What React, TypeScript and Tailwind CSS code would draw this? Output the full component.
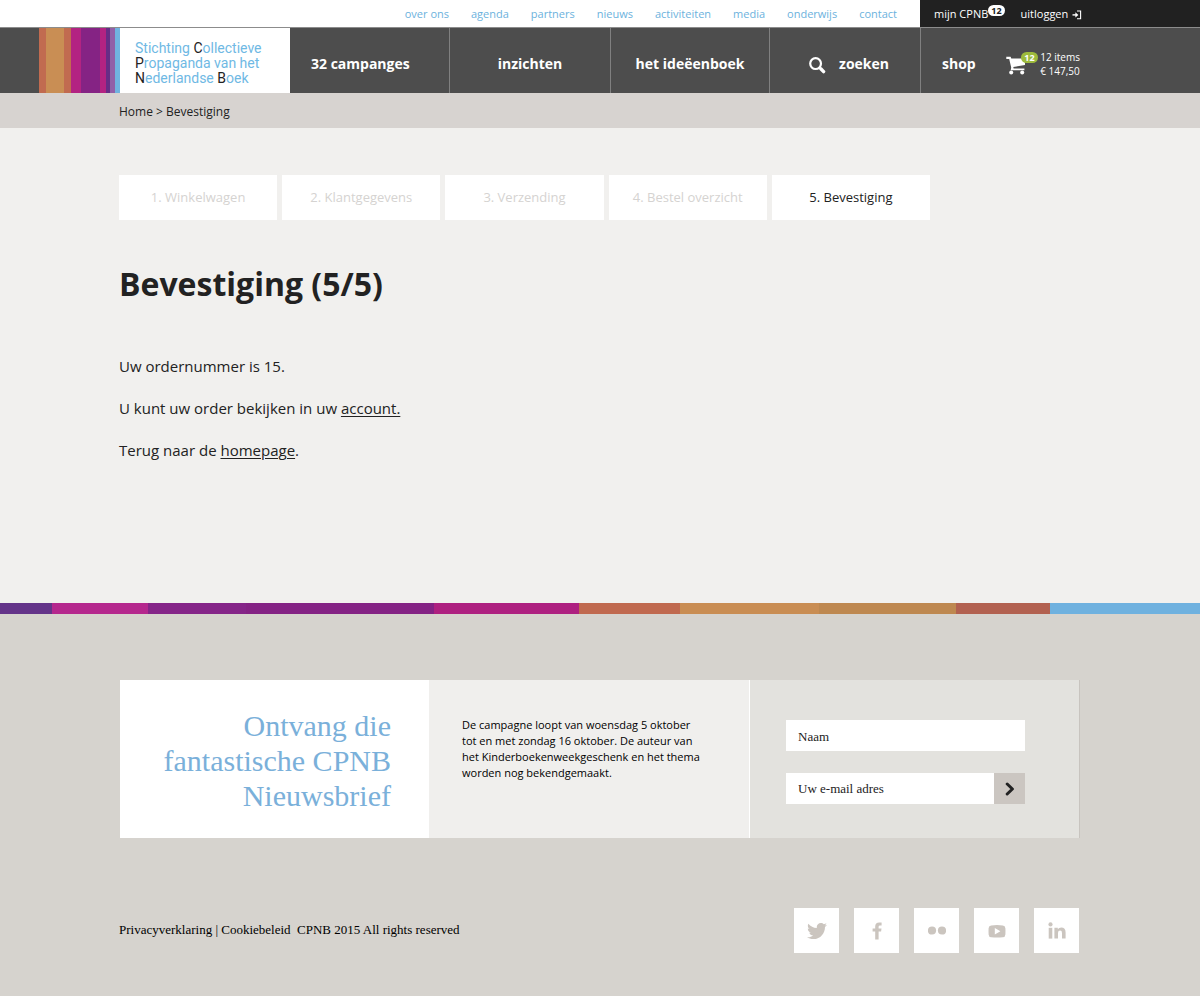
import React from "react";
import { FaTwitter } from "react-icons/fa";

const topLinks = ["over ons", "agenda", "partners", "nieuws", "activiteiten", "media", "onderwijs", "contact"];

const steps = ["1. Winkelwagen", "2. Klantgegevens", "3. Verzending", "4. Bestel overzicht", "5. Bevestiging"];

function SearchIcon() {
  return (
    <svg width="17" height="17" viewBox="0 0 17 17" fill="none" stroke="currentColor" aria-hidden="true">
      <circle cx="6.6" cy="6.6" r="5.4" strokeWidth="2.2" />
      <path d="M10.6 10.6L11.6 11.6" strokeWidth="2" />
      <path d="M11.8 11.8L14.6 14.6" strokeWidth="3.4" strokeLinecap="round" />
    </svg>
  );
}

function CartIcon() {
  return (
    <svg width="20" height="19" viewBox="0 0 20 19" fill="currentColor" aria-hidden="true">
      <path d="M0.3 0.8H4.6L5.3 2.4H19V9L7.3 11.1L7.6 12.4H18.4V14.2H4.7L5.2 11.6L3.2 2.9H0.3Z" />
      <circle cx="5.2" cy="16.6" r="2" />
      <circle cx="16.2" cy="16.6" r="2" />
    </svg>
  );
}

function LogoutIcon() {
  return (
    <svg width="10" height="10" viewBox="0 0 10 10" fill="none" stroke="currentColor" aria-hidden="true">
      <path d="M5 1H8.6V8.8H5" strokeWidth="1.1" />
      <path d="M0.5 4.9H4" strokeWidth="1.4" />
      <path d="M3.4 2.3L6.4 4.9L3.4 7.5Z" fill="currentColor" stroke="none" />
    </svg>
  );
}

function FacebookIcon() {
  return (
    <svg width="18" height="18" viewBox="0 0 18 18" fill="currentColor" aria-hidden="true">
      <path d="M7.2 17.6V9.6H4.6V6.5H7.2V4.3Q7.2 0.4 11.2 0.4H13.6V3.4H12Q10.6 3.4 10.6 4.8V6.5H13.5L13.1 9.6H10.6V17.6Z" />
    </svg>
  );
}

function LinkedinIcon() {
  return (
    <svg width="18" height="18" viewBox="0 0 18 18" fill="currentColor" aria-hidden="true">
      <circle cx="2.5" cy="2.4" r="2.1" />
      <path d="M0.7 5.8H4.3V16.6H0.7Z" />
      <path d="M6.4 5.8H9.8V7.3Q10.9 5.5 13.2 5.5Q17.6 5.5 17.6 10.4V16.6H14V11Q14 8.6 12.1 8.6Q10 8.6 10 11V16.6H6.4Z" />
    </svg>
  );
}

function FlickrIcon() {
  return (
    <svg width="18" height="18" viewBox="0 0 18 18" fill="currentColor" aria-hidden="true">
      <circle cx="4" cy="8.5" r="4.1" />
      <circle cx="14" cy="8.5" r="4.1" />
    </svg>
  );
}

function YoutubeIcon() {
  return (
    <svg width="18" height="18" viewBox="0 0 18 18" fill="currentColor" aria-hidden="true">
      <path
        fillRule="evenodd"
        d="M3.2 3.4Q9 2.8 14.8 3.4Q17.2 3.6 17.4 6.2Q17.6 9.3 17.4 12.4Q17.2 15 14.8 15.2Q9 15.8 3.2 15.2Q0.8 15 0.6 12.4Q0.4 9.3 0.6 6.2Q0.8 3.6 3.2 3.4ZM6.8 6V12.6L12.4 9.3Z"
      />
    </svg>
  );
}

const socials = [
  { name: "Twitter", icon: <FaTwitter size={20} /> },
  { name: "Facebook", icon: <FacebookIcon /> },
  { name: "Flickr", icon: <FlickrIcon /> },
  { name: "YouTube", icon: <YoutubeIcon /> },
  { name: "LinkedIn", icon: <LinkedinIcon /> },
];

function Initial({ children }: { children: string }) {
  return <span className="text-[#222222]">{children}</span>;
}

function Header() {
  return (
    <header className="whitespace-nowrap">
      <div className="grid h-7 grid-cols-[1fr_800px_160px_1fr] border-b border-[#8c8c8c] text-[11px]">
        <nav aria-label="Service" className="col-span-2 flex items-center justify-end gap-[22px] bg-white pt-0.5 pr-[23px] text-[#6cb2dd]">
          {topLinks.map((link) => (
            <a key={link} href="#">
              {link}
            </a>
          ))}
        </nav>
        <div className="col-span-2 flex items-center gap-4 bg-[#212121] pt-0.5 pl-[14px] text-white">
          <a href="#" className="flex items-center">
            mijn CPNB
            <span className="mb-2 rounded-full bg-white px-[3px] text-[9px] leading-[11px] font-bold text-[#212121]">12</span>
          </a>
          <a href="#" className="flex items-center gap-1">
            uitloggen <LogoutIcon />
          </a>
        </div>
      </div>
      <div className="grid h-[65px] grid-cols-[1fr_170px_160px_161px_159px_151px_159px_1fr] bg-[#4d4d4d] text-[14px] font-bold text-white">
        <div className="flex justify-end">
          <span className="w-[7px] bg-[#c16b50]" />
          <span className="w-[18px] bg-[#c98e54]" />
          <span className="w-[7px] bg-[#c16b50]" />
          <span className="w-[10px] bg-[#b32382]" />
          <span className="w-[19px] bg-[#852384]" />
          <span className="w-[6px] bg-[#b32382]" />
          <span className="w-[4px] bg-[#672d86]" />
          <span className="w-[5px] bg-[#9160a8]" />
          <span className="w-[5px] bg-[#70b3e0]" />
        </div>
        <a href="#" className="flex flex-col justify-center bg-white pt-1.5 pl-[15px] font-['Roboto',sans-serif] text-[14px] leading-[15px] font-normal text-[#6fb9e4]">
          <span>
            Stichting <Initial>C</Initial>ollectieve
          </span>
          <span>
            <Initial>P</Initial>ropaganda van het
          </span>
          <span>
            <Initial>N</Initial>ederlandse <Initial>B</Initial>oek
          </span>
        </a>
        <a href="#" className="flex items-center border-r border-[#808080] pt-2.5 pl-[21px]">
          <span className="mb-1">32 campanges</span>
        </a>
        <a href="#" className="flex items-center justify-center border-r border-[#808080] pt-2.5">
          <span className="mb-1">inzichten</span>
        </a>
        <a href="#" className="flex items-center justify-center border-r border-[#808080] pt-2.5">
          <span className="mb-1">het ideëenboek</span>
        </a>
        <a href="#" className="flex items-center justify-end gap-[13px] border-r border-[#808080] pt-2.5 pr-[31px]">
          <SearchIcon />
          <span className="mb-1">zoeken</span>
        </a>
        <div className="flex items-center justify-between pt-2.5 pl-[21px]">
          <a href="#" className="mb-1">
            shop
          </a>
          <a href="#" className="flex items-center gap-[14px] text-[10px] leading-[14px] font-medium">
            <span className="relative">
              <CartIcon />
              <span className="absolute -top-1 left-[15px] rounded-full bg-[#9dbb3c] px-[3px] text-[9px] leading-[11px] font-bold">12</span>
            </span>
            <span className="mb-1">
              12 items
              <br />€ 147,50
            </span>
          </a>
        </div>
      </div>
      <nav aria-label="Kruimelpad" className="h-[35px] bg-[#d7d3d0] text-[12px] leading-[37px] text-[#222222]">
        <div className="mx-auto max-w-[962px]">
          <a href="#">Home</a> &gt; <a href="#">Bevestiging</a>
        </div>
      </nav>
    </header>
  );
}

function ColourBar() {
  return (
    <div className="grid h-[11px] grid-cols-[52fr_96fr_98fr_188fr_145fr_101fr_139fr_137fr_94fr_150fr]">
      <span className="bg-[#643489]" />
      <span className="bg-[#b5278d]" />
      <span className="bg-[#852588]" />
      <span className="bg-[#842284]" />
      <span className="bg-[#ae2080]" />
      <span className="bg-[#c0694f]" />
      <span className="bg-[#c98d53]" />
      <span className="bg-[#be8850]" />
      <span className="bg-[#b26150]" />
      <span className="bg-[#6fb1df]" />
    </div>
  );
}

function Footer() {
  return (
    <footer className="bg-[#d6d3ce] pb-[43px]">
      <ColourBar />
      <form
        onSubmit={(event) => event.preventDefault()}
        className="mx-auto mt-[66px] grid max-w-[960px] grid-cols-[309px_321px_1fr] border-r border-[#c8c4bf]"
      >
        <h2 className="bg-white pt-7 pr-[38px] pb-[25px] text-right font-['Liberation_Serif',serif] text-[30px] leading-[35px] text-[#7ab0da]">
          Ontvang die
          <br />
          fantastische CPNB
          <br />
          Nieuwsbrief
        </h2>
        <p className="border-r border-white bg-[#f0efed] pt-[37px] pl-[33px] text-[11px] leading-4 whitespace-nowrap text-black">
          De campagne loopt van woensdag 5 oktober
          <br />
          tot en met zondag 16 oktober. De auteur van
          <br />
          het Kinderboekenweekgeschenk en het thema
          <br />
          worden nog bekendgemaakt.
        </p>
        <div className="flex flex-col gap-[22px] bg-[#e3e2de] pt-10 pr-[54px] pl-9 font-['Liberation_Serif',serif] text-[13px]">
          <input
            type="text"
            aria-label="Naam"
            placeholder="Naam"
            className="h-[31px] bg-white px-3 pt-0.5 text-[#222222] outline-none placeholder:text-[#222222]"
          />
          <div className="flex h-[31px]">
            <input
              type="email"
              aria-label="Uw e-mail adres"
              placeholder="Uw e-mail adres"
              className="min-w-0 flex-1 bg-white px-3 text-[#222222] outline-none placeholder:text-[#222222]"
            />
            <button type="submit" aria-label="Aanmelden" className="flex w-[31px] items-center justify-center bg-[#cbc6c1] text-[#222222]">
              <svg width="10" height="14" viewBox="0 0 10 14" fill="none" stroke="currentColor" aria-hidden="true">
                <path d="M2.2 2L7.4 7L2.2 12" strokeWidth="3" strokeLinecap="round" strokeLinejoin="round" />
              </svg>
            </button>
          </div>
        </div>
      </form>
      <div className="mx-auto mt-[70px] flex max-w-[962px] items-center justify-between pr-0.5">
        <p className="mb-0.5 font-['Liberation_Serif',serif] text-[13px] text-black">
          <a href="#">Privacyverklaring</a> | <a href="#">Cookiebeleid</a>&nbsp; CPNB 2015 All rights reserved
        </p>
        <div className="flex gap-[15px]">
          {socials.map((social) => (
            <a key={social.name} href="#" aria-label={social.name} className="flex size-[45px] items-center justify-center bg-white text-[#cbc5bf]">
              {social.icon}
            </a>
          ))}
        </div>
      </div>
    </footer>
  );
}

export default function App() {
  return (
    <div className="min-h-screen bg-[#d6d3ce] font-['Open_Sans','Noto_Sans',sans-serif]">
      <Header />
      <main className="bg-[#f1f0ee] pt-[47px] pb-[142px] text-[#222222]">
        <div className="mx-auto max-w-[962px]">
          <ol className="grid max-w-[811px] grid-cols-5 gap-[5px] text-center text-[13px] leading-[45px] whitespace-nowrap">
            {steps.map((step, index) => (
              <li key={step} className={index === steps.length - 1 ? "bg-white text-[#222222]" : "bg-white text-[#d5d3d1]"}>
                {step}
              </li>
            ))}
          </ol>
          <h1 className="mt-10 text-[32px] leading-[48px] font-bold">Bevestiging (5/5)</h1>
          <div className="mt-[48px] space-y-[21px] text-[15px] leading-[21px]">
            <p>Uw ordernummer is 15.</p>
            <p>
              U kunt uw order bekijken in uw{" "}
              <a href="#" className="underline underline-offset-2">
                account.
              </a>
            </p>
            <p>
              Terug naar de{" "}
              <a href="#" className="underline underline-offset-2">
                homepage
              </a>
              .
            </p>
          </div>
        </div>
      </main>
      <Footer />
    </div>
  );
}
